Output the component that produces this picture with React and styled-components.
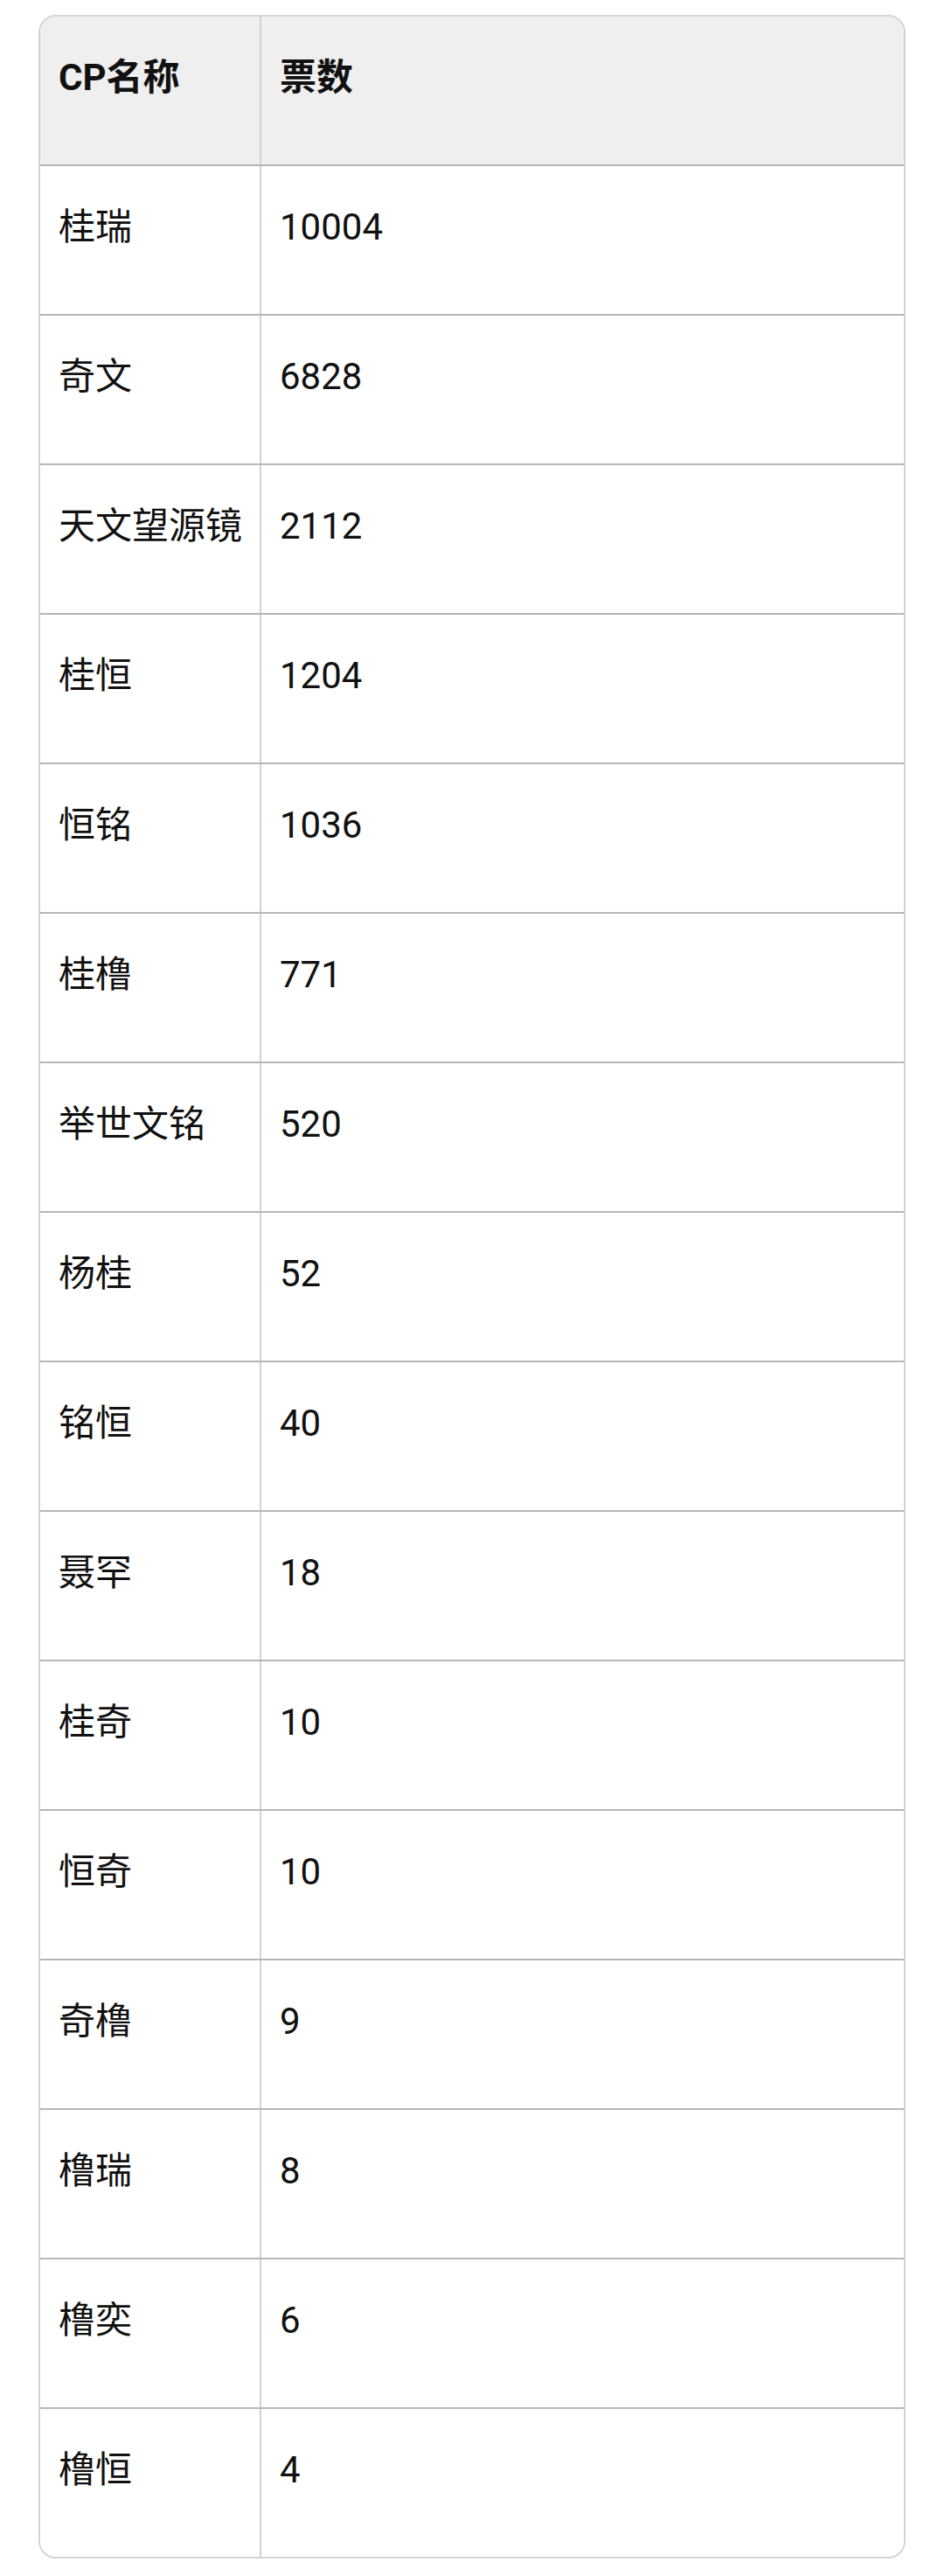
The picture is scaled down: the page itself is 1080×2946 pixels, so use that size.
import React from "react";
import styled, { createGlobalStyle } from "styled-components";

const GlobalStyle = createGlobalStyle`
  html, body {
    margin: 0;
    padding: 0;
    background: #ffffff;
  }
  body {
    font-family: Roboto, "Noto Sans CJK SC", sans-serif;
    color: #111111;
  }
`;

const Page = styled.div`
  padding: 17px 44px 20px 44px;
`;

const Table = styled.div`
  border: 2px solid #d4d4d4;
  border-radius: 20px;
  overflow: hidden;
  background: #ffffff;
`;

const Row = styled.div`
  display: grid;
  grid-template-columns: 253px 1fr;
  height: 169px;
  background: ${(p) => (p.head ? "#efefef" : "#ffffff")};
  border-bottom: 2px solid #b6b6b6;

  &:last-child {
    border-bottom: none;
  }
`;

const Cell = styled.div`
  box-sizing: border-box;
  padding: 38px 21px 0 21px;
  font-size: 42px;
  line-height: 63px;
  font-weight: ${(p) => (p.head ? 700 : 400)};
  white-space: nowrap;
  border-right: ${(p) => (p.first ? "2px solid #d2d2d2" : "none")};
`;

const votes = [
  ["桂瑞", 10004],
  ["奇文", 6828],
  ["天文望源镜", 2112],
  ["桂恒", 1204],
  ["恒铭", 1036],
  ["桂橹", 771],
  ["举世文铭", 520],
  ["杨桂", 52],
  ["铭恒", 40],
  ["聂罕", 18],
  ["桂奇", 10],
  ["恒奇", 10],
  ["奇橹", 9],
  ["橹瑞", 8],
  ["橹奕", 6],
  ["橹恒", 4],
];

export default function App() {
  return (
    <Page>
      <GlobalStyle />
      <Table>
        <Row head>
          <Cell head first>
            CP名称
          </Cell>
          <Cell head>票数</Cell>
        </Row>
        {votes.map(([name, count]) => (
          <Row key={name}>
            <Cell first>{name}</Cell>
            <Cell>{count}</Cell>
          </Row>
        ))}
      </Table>
    </Page>
  );
}
